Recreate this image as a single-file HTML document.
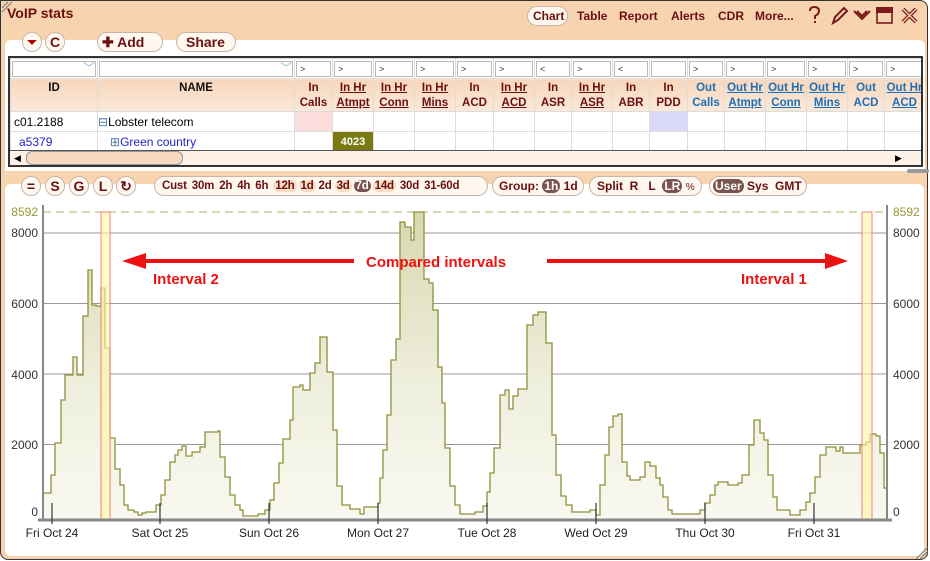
<!DOCTYPE html>
<html><head><meta charset="utf-8">
<style>
*{margin:0;padding:0;box-sizing:border-box}
body{width:930px;height:561px;overflow:hidden;background:#fff;font-family:"Liberation Sans",sans-serif;position:relative}
.win{position:absolute;left:0;top:0;width:928px;height:560px;background:#f7d3b0;border:1px solid #333;border-radius:0 8px 8px 8px}
.a{position:absolute}
.title{left:7px;top:5px;font-size:14px;font-weight:bold;color:#6a1010}
.tb{font-size:12px;font-weight:bold;color:#6a1010;top:9px}
.pill{position:absolute;border:1px solid #c9b6a8;border-radius:11px;background:#fff8f0;height:20px;font-size:12px;font-weight:bold;color:#6a1010;line-height:18px;white-space:nowrap}
.circ{position:absolute;width:20px;height:20px;border-radius:50%;border:1px solid #c9b6a8;background:#fff8f0;font-size:14px;font-weight:bold;color:#6a1010;text-align:center;line-height:18px}
.panel{position:absolute;background:#fff}
table{border-collapse:collapse;table-layout:fixed}
td{border:1px solid #ddd;font-size:11px;overflow:hidden;white-space:nowrap}
.hd td{background:linear-gradient(#f8d7bc,#fbe9da);text-align:center;font-weight:bold;font-size:11.5px;line-height:15px;color:#6a1010;vertical-align:top;padding-top:2px}
.hd td.b{color:#1d6fb8}
.u{text-decoration:underline}
.fr td{height:20px;padding:1px 1px;background:#fff}
.fr td div{border:1px solid #bbb;height:16px;font-size:9px;line-height:14px;padding-left:3px;color:#333}
.on{background:#7a5450;color:#fff;border-radius:8px;padding:0 2px}
.lt{background:#f8dcc4;border-radius:6px;padding:0 2px}
.tp span{margin-right:5px}
</style></head><body>
<div class="win"></div>
<div class="a title">VoIP stats</div>
<div class="pill" style="left:527px;top:6px;width:41px;height:20px;padding-left:5px">Chart</div>
<div class="a tb" style="left:577px">Table</div>
<div class="a tb" style="left:619px">Report</div>
<div class="a tb" style="left:671px">Alerts</div>
<div class="a tb" style="left:718px">CDR</div>
<div class="a tb" style="left:755px">More...</div>
<svg class="a" style="left:805px;top:5px" width="120" height="20" fill="none" stroke="#7a1a1a" stroke-width="2">
<path d="M5 6 Q5 2 9 2 Q14 2 14 6 Q14 9 10 11 V14 M10 16 V18"/>
<path d="M28 18 L30 12 L39 3 L42 6 L33 15 Z"/>
<path d="M49 6 L57 14 L65 6 M52 6 L57 11 L62 6"/>
<rect x="72" y="3" width="15" height="15" stroke-width="1.6"/><rect x="72" y="3" width="15" height="4" fill="#7a1a1a"/>
<path d="M98 4 L111 17 M111 4 L98 17" stroke-width="4"/><path d="M98 4 L111 17 M111 4 L98 17" stroke="#f7d3b0" stroke-width="1.5"/>
</svg>

<div class="panel" style="left:5px;top:40px;width:920px;height:131px;border-radius:6px 6px 0 0"></div>
<div class="circ" style="left:22px;top:32px;font-size:12px;color:#a00">⏷</div>
<div class="circ" style="left:45px;top:32px">C</div>
<div class="pill" style="left:97px;top:32px;width:66px;padding-left:4px;font-size:14px">✚ Add</div>
<div class="pill" style="left:176px;top:32px;width:60px;padding-left:9px;font-size:14px">Share</div>

<div class="a" style="left:8px;top:56px;width:915px;height:111px;border:2px solid #333;overflow:hidden;background:#fff">
<table style="width:913px">
<colgroup><col style="width:87px"><col style="width:197px"><col style="width:38px"><col style="width:41px"><col style="width:41px"><col style="width:41px"><col style="width:38px"><col style="width:41px"><col style="width:37px"><col style="width:41px"><col style="width:37px"><col style="width:38px"><col style="width:37px"><col style="width:41px"><col style="width:41px"><col style="width:41px"><col style="width:37px"><col style="width:40px"></colgroup>
<tr class="fr"><td><div style="text-align:right;color:#8bd;font-size:12px;line-height:13px">﹀</div></td><td><div style="text-align:right;color:#8bd;font-size:12px;line-height:13px">﹀</div></td><td><div>&gt;</div></td><td><div>&gt;</div></td><td><div>&gt;</div></td><td><div>&gt;</div></td><td><div>&gt;</div></td><td><div>&gt;</div></td><td><div>&lt;</div></td><td><div>&gt;</div></td><td><div>&lt;</div></td><td><div></div></td><td><div>&gt;</div></td><td><div>&gt;</div></td><td><div>&gt;</div></td><td><div>&gt;</div></td><td><div>&gt;</div></td><td><div>&gt;</div></td></tr>
<tr class="hd" style="height:31px"><td style="color:#111">ID</td><td style="color:#111">NAME</td><td>In<br>Calls</td><td class="u">In Hr<br>Atmpt</td><td class="u">In Hr<br>Conn</td><td class="u">In Hr<br>Mins</td><td>In<br>ACD</td><td class="u">In Hr<br>ACD</td><td>In<br>ASR</td><td class="u">In Hr<br>ASR</td><td>In<br>ABR</td><td>In<br>PDD</td><td class="b">Out<br>Calls</td><td class="b u">Out Hr<br>Atmpt</td><td class="b u">Out Hr<br>Conn</td><td class="b u">Out Hr<br>Mins</td><td class="b">Out<br>ACD</td><td class="b u">Out Hr<br>ACD</td></tr>
<tr style="height:20px"><td style="padding-left:3px;font-size:12px">c01.2188</td><td style="font-size:12px"><span style="color:#47a">⊟</span>Lobster telecom</td><td style="background:#fddcdc"></td><td></td><td></td><td></td><td></td><td></td><td></td><td></td><td></td><td style="background:#d8d8fa"></td><td></td><td></td><td></td><td></td><td></td><td></td></tr>
<tr style="height:20px"><td style="padding-left:8px;font-size:12px;color:#22c">a5379</td><td style="padding-left:12px;font-size:12px;color:#22c"><span style="color:#47a">⊞</span>Green country</td><td></td><td style="background:#7a7a10;color:#fff;font-weight:bold;text-align:center">4023</td><td></td><td></td><td></td><td></td><td></td><td></td><td></td><td></td><td></td><td></td><td></td><td></td><td></td><td></td></tr>
</table>
<div class="a" style="left:0;top:92px;width:911px;height:17px;background:#fdf1e8;border-top:1px solid #555"></div>
<div class="a" style="left:4px;top:95px;font-size:9px">◀</div>
<div class="a" style="left:16px;top:93px;width:157px;height:14px;border:1px solid #999;border-radius:6px;background:#f9d9c0"></div>
<div class="a" style="left:885px;top:95px;font-size:9px">▶</div>
</div>
<div class="a" style="left:907px;top:169px;width:22px;height:4px;background:#999;border-radius:2px"></div>

<div class="panel" style="left:5px;top:184px;width:919px;height:372px;border-radius:6px 6px 6px 6px"></div>
<div class="circ" style="left:21px;top:176px">=</div>
<div class="circ" style="left:45px;top:176px">S</div>
<div class="circ" style="left:69px;top:176px">G</div>
<div class="circ" style="left:93px;top:176px">L</div>
<div class="circ" style="left:116px;top:176px">↻</div>
<div class="pill tp" style="left:154px;top:176px;width:334px;padding-left:7px;font-size:11.5px;letter-spacing:-0.2px"><span>Cust</span><span>30m</span><span>2h</span><span>4h</span><span>6h</span><span class="lt" style="margin-right:2px">12h</span><span class="lt" style="margin-right:3px">1d</span><span style="margin-right:3px">2d</span><span class="lt" style="margin-right:2px">3d</span><span class="on" style="margin-right:2px">7d</span><span class="lt" style="margin-right:4px">14d</span><span>30d</span><span style="margin:0">31-60d</span></div>
<div class="pill" style="left:492px;top:176px;width:92px;padding-left:6px">Group: <span class="on">1h</span> 1d</div>
<div class="pill" style="left:589px;top:176px;width:113px;padding-left:7px">Split&nbsp; R&nbsp;&nbsp; L&nbsp; <span class="on">LR</span> <span style="font-weight:normal;font-size:10px">%</span></div>
<div class="pill" style="left:709px;top:176px;width:98px;padding-left:3px"><span class="on">User</span> Sys&nbsp; GMT</div>

<svg class="a" style="left:0;top:0" width="930" height="561" font-family="Liberation Sans, sans-serif">
<defs><linearGradient id="g" x1="0" y1="0" x2="0" y2="1"><stop offset="0" stop-color="#d8d8b0"/><stop offset="0.6" stop-color="#f0f0e0"/><stop offset="1" stop-color="#f8f8f0"/></linearGradient></defs>
<g stroke="#999" stroke-width="1">
<line x1="43" y1="233" x2="887" y2="233"/><line x1="43" y1="303.5" x2="887" y2="303.5"/><line x1="43" y1="374" x2="887" y2="374"/><line x1="43" y1="444.5" x2="887" y2="444.5"/>
</g>
<line x1="43" y1="212" x2="887" y2="212" stroke="#b0b060" stroke-dasharray="8,5"/>
<path fill="url(#g)" d="M43,519 V493 H51 V475 H55 V443 H61 V400 H65 V375 H73 V357 H77 V375 H83 V316 H88 V270 H92 V305 H96 V306 H101 V288 H105 V348 H110 V438 H115 V469 H120 V485 H124 V505 H128 V510 H134 V512 H138 V515 H142 V513 H146 V512 H156 V505 H161 V495 H165 V480 H170 V462 H175 V455 H178 V450 H182 V446 H186 V456 H192 V452 H200 V447 H205 V432 H218 V431 H220 V457 H225 V477 H230 V495 H235 V505 H240 V510 H243 V516 H258 V514 H265 V510 H270 V500 H274 V483 H279 V463 H283 V439 H290 V420 H293 V387 H300 V385 H303 V390 H310 V373 H315 V363 H320 V337 H327 V372 H333 V430 H337 V486 H342 V505 H350 V509 H360 V514 H364 V507 H378 V503 H380 V478 H383 V450 H387 V415 H391 V360 H396 V339 H400 V222 H405 V227 H411 V240 H414 V212 H424 V279 H429 V283 H433 V310 H438 V367 H442 V403 H445 V448 H450 V486 H455 V505 H460 V514 H475 V512 H483 V506 H487 V492 H490 V473 H494 V448 H500 V395 H505 V390 H509 V409 H513 V396 H518 V389 H527 V325 H533 V315 H538 V312 H546 V343 H552 V435 H556 V475 H561 V496 H566 V505 H572 V512 H585 V512 H590 V510 H596 V515 H600 V485 H605 V455 H609 V427 H613 V416 H618 V414 H622 V462 H627 V476 H630 V480 H640 V477 H645 V462 H650 V466 H656 V478 H660 V485 H663 V497 H668 V510 H672 V514 H693 V514 H700 V510 H705 V503 H710 V495 H715 V485 H718 V482 H728 V485 H738 V483 H742 V475 H749 V445 H754 V420 H760 V433 H764 V440 H768 V475 H773 V497 H777 V510 H790 V515 H800 V510 H806 V502 H810 V493 H815 V477 H820 V455 H826 V447 H836 V451 H840 V447 H843 V453 H858 V453 H860 V445 H866 V442 H870 V434 H876 V436 H880 V453 H884 V488 H887 V519 Z"/>
<path fill="none" stroke="#8f8f3a" stroke-width="1.3" d="M43,493 H51 V475 H55 V443 H61 V400 H65 V375 H73 V357 H77 V375 H83 V316 H88 V270 H92 V305 H96 V306 H101 V288 H105 V348 H110 V438 H115 V469 H120 V485 H124 V505 H128 V510 H134 V512 H138 V515 H142 V513 H146 V512 H156 V505 H161 V495 H165 V480 H170 V462 H175 V455 H178 V450 H182 V446 H186 V456 H192 V452 H200 V447 H205 V432 H218 V431 H220 V457 H225 V477 H230 V495 H235 V505 H240 V510 H243 V516 H258 V514 H265 V510 H270 V500 H274 V483 H279 V463 H283 V439 H290 V420 H293 V387 H300 V385 H303 V390 H310 V373 H315 V363 H320 V337 H327 V372 H333 V430 H337 V486 H342 V505 H350 V509 H360 V514 H364 V507 H378 V503 H380 V478 H383 V450 H387 V415 H391 V360 H396 V339 H400 V222 H405 V227 H411 V240 H414 V212 H424 V279 H429 V283 H433 V310 H438 V367 H442 V403 H445 V448 H450 V486 H455 V505 H460 V514 H475 V512 H483 V506 H487 V492 H490 V473 H494 V448 H500 V395 H505 V390 H509 V409 H513 V396 H518 V389 H527 V325 H533 V315 H538 V312 H546 V343 H552 V435 H556 V475 H561 V496 H566 V505 H572 V512 H585 V512 H590 V510 H596 V515 H600 V485 H605 V455 H609 V427 H613 V416 H618 V414 H622 V462 H627 V476 H630 V480 H640 V477 H645 V462 H650 V466 H656 V478 H660 V485 H663 V497 H668 V510 H672 V514 H693 V514 H700 V510 H705 V503 H710 V495 H715 V485 H718 V482 H728 V485 H738 V483 H742 V475 H749 V445 H754 V420 H760 V433 H764 V440 H768 V475 H773 V497 H777 V510 H790 V515 H800 V510 H806 V502 H810 V493 H815 V477 H820 V455 H826 V447 H836 V451 H840 V447 H843 V453 H858 V453 H860 V445 H866 V442 H870 V434 H876 V436 H880 V453 H884 V488 H887"/>
<rect x="101" y="212" width="9" height="307" fill="#fff6a0" fill-opacity="0.6" stroke="#f08080"/>
<rect x="862" y="212" width="10" height="307" fill="#fff6a0" fill-opacity="0.6" stroke="#f08080"/>
<line x1="43" y1="205" x2="43" y2="520" stroke="#888" stroke-width="2"/>
<line x1="887" y1="205" x2="887" y2="520" stroke="#888" stroke-width="2"/>
<line x1="38" y1="520" x2="892" y2="520" stroke="#888" stroke-width="3"/>
<g stroke="#334" stroke-width="1.2"><line x1="52" y1="503" x2="52" y2="524"/><line x1="160" y1="503" x2="160" y2="524"/><line x1="269" y1="503" x2="269" y2="524"/><line x1="378" y1="503" x2="378" y2="524"/><line x1="487" y1="503" x2="487" y2="524"/><line x1="596" y1="503" x2="596" y2="524"/><line x1="705" y1="503" x2="705" y2="524"/><line x1="814" y1="503" x2="814" y2="524"/></g>
<g font-size="12" fill="#222" text-anchor="middle"><text x="52" y="537">Fri Oct 24</text><text x="160" y="537">Sat Oct 25</text><text x="269" y="537">Sun Oct 26</text><text x="378" y="537">Mon Oct 27</text><text x="487" y="537">Tue Oct 28</text><text x="596" y="537">Wed Oct 29</text><text x="705" y="537">Thu Oct 30</text><text x="814" y="537">Fri Oct 31</text></g>
<g font-size="12" fill="#333" text-anchor="end"><text x="38" y="237">8000</text><text x="38" y="308">6000</text><text x="38" y="379">4000</text><text x="38" y="449">2000</text><text x="38" y="516">0</text></g>
<text x="38" y="216" font-size="12" fill="#999933" text-anchor="end">8592</text>
<g font-size="12" fill="#333"><text x="893" y="237">8000</text><text x="893" y="308">6000</text><text x="893" y="379">4000</text><text x="893" y="449">2000</text><text x="893" y="516">0</text></g>
<text x="893" y="216" font-size="12" fill="#999933">8592</text>
<g fill="#ee1111" stroke="none">
<rect x="140" y="259" width="214" height="4"/><path d="M122,261 L146,253 L146,269 Z"/>
<rect x="547" y="259" width="283" height="4"/><path d="M848,261 L825,253 L825,269 Z"/>
</g>
<g font-size="15" font-weight="bold" fill="#ee1111"><text x="366" y="267">Compared intervals</text><text x="153" y="284">Interval 2</text><text x="741" y="284">Interval 1</text></g>
<path d="M916,559 L928,547 M920,559 L928,551 M924,559 L928,555" stroke="#777"/>
<path d="M2,12 L12,2 M2,8 L8,2" stroke="#777"/>
</svg>
</body></html>
